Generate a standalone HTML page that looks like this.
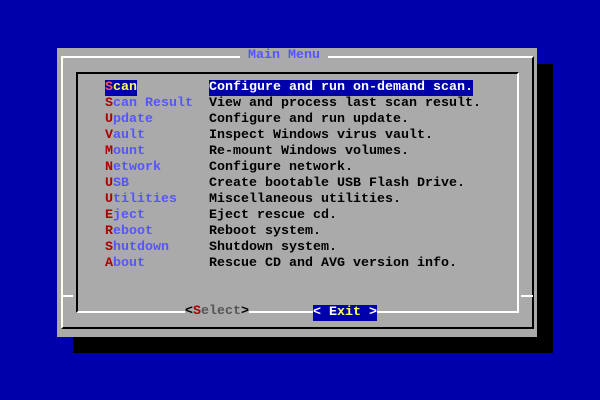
<!DOCTYPE html>
<html><head><style>
html,body{margin:0;padding:0;width:600px;height:400px;overflow:hidden;background:#0000aa;}
div{position:absolute;box-sizing:border-box;}
.t{font-family:"Liberation Mono","DejaVu Sans Mono",monospace;font-size:13.33px;font-weight:bold;line-height:16px;white-space:pre;}
.r{color:#aa0000}.b{color:#5555ff}.k{color:#000}.y{color:#ffff55}.w{color:#fff}.g{color:#555}.lr{color:#ff5555}
</style></head><body>
<div style="left:73px;top:64px;width:480px;height:289px;background:#000"></div>
<div style="left:57px;top:48px;width:480px;height:289px;background:#aaa"></div>
<!-- outer frame -->
<div style="left:61px;top:56px;width:473px;height:273px;border-left:2px solid #fff;border-top:2px solid #fff;border-right:2px solid #000;border-bottom:2px solid #000"></div>
<!-- inner frame -->
<div style="left:76px;top:72px;width:443px;height:241px;border-left:2px solid #000;border-top:2px solid #000;border-right:2px solid #fff;border-bottom:2px solid #fff"></div>
<div style="left:62px;top:295px;width:11px;height:2px;background:#fff"></div>
<div style="left:521px;top:295px;width:12px;height:2px;background:#fff"></div>
<div class="t b" style="left:240px;top:48px;background:#aaa"> Main Menu </div>
<div style="left:105px;top:80px;width:32px;height:16px;background:#0000aa"></div>
<div style="left:209px;top:80px;width:264px;height:16px;background:#0000aa"></div>
<div class="t" style="left:105px;top:80px"><span class="lr">S</span><span class="y">can</span>
<span class="r">S</span><span class="b">can Result</span>
<span class="r">U</span><span class="b">pdate</span>
<span class="r">V</span><span class="b">ault</span>
<span class="r">M</span><span class="b">ount</span>
<span class="r">N</span><span class="b">etwork</span>
<span class="r">U</span><span class="b">SB</span>
<span class="r">U</span><span class="b">tilities</span>
<span class="r">E</span><span class="b">ject</span>
<span class="r">R</span><span class="b">eboot</span>
<span class="r">S</span><span class="b">hutdown</span>
<span class="r">A</span><span class="b">bout</span></div>
<div class="t k" style="left:209px;top:80px"><span class="w">Configure and run on-demand scan.</span>
View and process last scan result.
Configure and run update.
Inspect Windows virus vault.
Re-mount Windows volumes.
Configure network.
Create bootable USB Flash Drive.
Miscellaneous utilities.
Eject rescue cd.
Reboot system.
Shutdown system.
Rescue CD and AVG version info.</div>
<div class="t" style="left:185px;top:304px;background:#aaa"><span class="k">&lt;</span><span class="r">S</span><span class="g">elect</span><span class="k">&gt;</span></div>
<div class="t" style="left:313px;top:305px;width:64px;height:16px;background:#0000aa"><span class="w">&lt; E</span><span class="y">xit</span><span class="w"> &gt;</span></div>
</body></html>
